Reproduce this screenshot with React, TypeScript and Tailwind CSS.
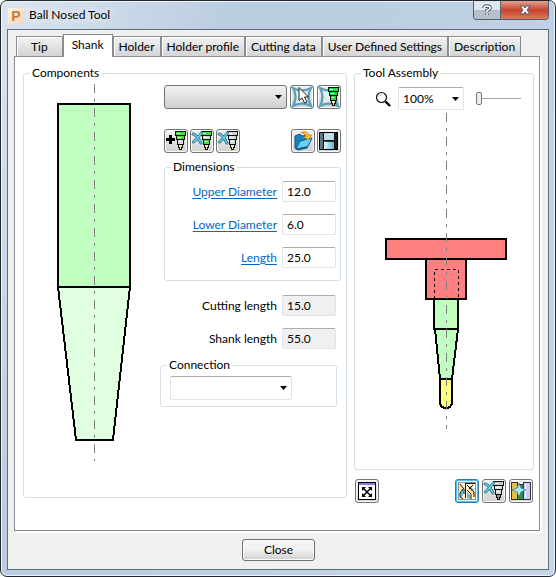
import { useState } from 'react';
import type { ReactNode } from 'react';

const TABS = ['Tip', 'Shank', 'Holder', 'Holder profile', 'Cutting data', 'User Defined Settings', 'Description'];

const STAR = 'M2 2 Q11 7 20 2 Q15 11 20 20 Q11 15 2 20 Q7 11 2 2 Z';

/*  Square toolbar button with a 22px icon inside.
 */
function IconButton({ label, active = false, children }: { label: string; active?: boolean; children: ReactNode }) {
  return (
    <button
      type="button"
      aria-label={label}
      className={
        active
          ? 'size-6 shrink-0 rounded-[3px] border border-[#2c7ba5] bg-[#e9f8ff] shadow-[inset_0_0_0_1px_#45c4f5]'
          : 'size-6 shrink-0 rounded-[3px] border border-[#747474] bg-linear-to-b from-[#f2f2f2] to-[#d2d2d2] shadow-[inset_0_0_0_1px_#fafafa]'
      }
    >
      <svg viewBox="0 0 22 22" className="size-[22px]">{children}</svg>
    </button>
  );
}

/*  Small stepped tool: three sections and a tip.
 */
function ToolGlyph({ top, middle, low = '#d8d8d8', tip = '#ffe9a0' }: { top: string; middle: string; low?: string; tip?: string }) {
  return (
    <g stroke="#111" strokeWidth="1" shapeRendering="crispEdges">
      <rect x="10.5" y="1.5" width="10" height="4" fill={top} />
      <rect x="11.5" y="5.5" width="8" height="4" fill={middle} />
      <rect x="12.5" y="9.5" width="6" height="5" fill={low} />
      <path d="M13.500 14.500 h4 v3 h-1 v2 h-2 v-2 h-1 z" fill={tip} />
      <path d="M12 3.500 h3" stroke="#fff" />
      <path d="M13 7.500 h3 M14 11.500 h2" stroke="#fff" />
    </g>
  );
}

function BlueCross() {
  return (
    <g fill="none" strokeLinecap="round">
      <path d="M2 4 Q6 5 10 13 M10.500 3 Q7 8 2.500 12" stroke="#246c83" strokeWidth="3" />
      <path d="M2 4 Q6 5 10 13 M10.500 3 Q7 8 2.500 12" stroke="#69cde6" strokeWidth="1.600" />
    </g>
  );
}

function Group({ title, className, children }: { title: string; className: string; children: ReactNode }) {
  return (
    <fieldset className={'min-w-0 rounded-[3px] border border-[#d5dfe5] ' + className}>
      <legend className="ml-1.5 h-4 px-0.5 leading-4">{title}</legend>
      {children}
    </fieldset>
  );
}

function Arrow() {
  return (
    <svg viewBox="0 0 7 4" className="pointer-events-none absolute top-1/2 right-[5px] h-1 w-[7px] -translate-y-1/2">
      <path d="M0 0 H7 L3.500 4 Z" fill="#000" />
    </svg>
  );
}

function Field({ id, label, value, link = false, readOnly = false }: { id: string; label: string; value: string; link?: boolean; readOnly?: boolean }) {
  return (
    <div className="flex items-center justify-end gap-[5px]">
      <label htmlFor={id}>
        {link ? <a href={'#' + id} className="text-[#0066cc] underline underline-offset-2">{label}</a> : label}
      </label>
      <input
        id={id}
        defaultValue={value}
        readOnly={readOnly}
        className={
          'h-[21px] w-[54px] rounded-[2px] border border-[#e2e3ea] border-t-[#abadb3] px-1 outline-none ' +
          (readOnly ? 'bg-[#f0f0f0]' : 'bg-white')
        }
      />
    </div>
  );
}

function ShankDrawing() {
  return (
    <svg viewBox="0 0 90 380" className="h-[380px] w-[90px]" shapeRendering="crispEdges">
      <rect x="9" y="23" width="72" height="183" fill="#c0ffc0" stroke="#000" strokeWidth="2" />
      <path d="M9 206 H81 L64 359 H27 Z" fill="#e0ffe0" stroke="#000" strokeWidth="2" />
      <path d="M45.500 3 V380" stroke="#808080" strokeDasharray="9 6 3 6" />
    </svg>
  );
}

function AssemblyDrawing() {
  return (
    <svg viewBox="0 0 134 359" className="mx-auto h-[359px] w-[134px]" shapeRendering="crispEdges">
      <g stroke="#000" strokeWidth="2">
        <rect x="9" y="129" width="120" height="20" fill="#ff8080" />
        <rect x="49" y="149" width="40" height="40" fill="#ff8080" />
        <rect x="57" y="189" width="24" height="30" fill="#c0ffc0" />
        <path d="M58 219 H81 L75 269 H63 Z" fill="#c0ffc0" />
        <path d="M63 269 H75 V293 Q74 298 69 298 Q64 298 63 293 Z" fill="#ffff80" />
      </g>
      <path d="M57.500 189 V159.500 H81.500 V189" fill="none" stroke="#000" strokeDasharray="3 3" />
      <path d="M69.500 3 V319" stroke="#808080" strokeDasharray="9 6 3 6" />
    </svg>
  );
}

function Components() {
  return (
    <Group title="Components" className="flex-1">
      <div className="flex pr-[5px] pb-9">
        <div className="flex w-[140px] shrink-0 justify-center">
          <ShankDrawing />
        </div>
        <div className="flex flex-1 flex-col pt-1">
          <div className="flex gap-[3px]">
            <div className="relative flex-1">
              <select aria-label="Component" className="h-6 w-full appearance-none rounded-[3px] border border-[#747474] bg-linear-to-b from-[#f2f2f2] to-[#d0d0d0] px-1" />
              <Arrow />
            </div>
            <IconButton label="Pick component">
              <path d={STAR} fill="#e3edef" stroke="#5aa3b6" strokeWidth="2.400" />
              <path d="M8 1.500 V14.500 L11 12 L13.500 17 L16 16 L13.500 11 H17.500 Z" fill="#fff" stroke="#222" />
            </IconButton>
            <IconButton label="Pick tool">
              <path d={STAR} fill="#e3edef" stroke="#5aa3b6" strokeWidth="2.400" />
              <ToolGlyph top="#35d335" middle="#35d335" low="#35d335" />
            </IconButton>
          </div>

          <div className="mt-5 flex justify-between">
            <div className="flex gap-0.5">
              <IconButton label="Add component">
                <path d="M5.500 5 V14 M1 9.500 H10" stroke="#000" strokeWidth="3" />
                <ToolGlyph top="#3be03b" middle="#3be03b" />
              </IconButton>
              <IconButton label="Remove component">
                <ToolGlyph top="#3be03b" middle="#d8d8d8" low="#3be03b" />
                <BlueCross />
              </IconButton>
              <IconButton label="Clear components">
                <ToolGlyph top="#d0d0d0" middle="#d8d8d8" />
                <BlueCross />
              </IconButton>
            </div>
            <div className="flex gap-0.5">
              <IconButton label="Open">
                <path d="M3 18 V6 L8 4 L10 6 L15 5 V9 L18 10 L15 18 L6 20 Z" fill="#1685bb" stroke="#0a5880" />
                <path d="M4 19 L8 11 L20 8 L16 16.500 Z" fill="#69d1f5" stroke="#0a5880" />
                <path d="M9 2.500 Q15 0 16.500 5 H19.500 L16 10 L11.500 6.500 H14 Q13 3.500 9 2.500 Z" fill="#f7bd32" stroke="#b77a13" strokeWidth="0.700" />
              </IconButton>
              <IconButton label="Save">
                <defs>
                  <linearGradient id="disk" x1="0" x2="1">
                    <stop offset="0" stopColor="#6c8791" />
                    <stop offset="0.5" stopColor="#2b3a40" />
                    <stop offset="1" stopColor="#10181b" />
                  </linearGradient>
                  <linearGradient id="slot" x1="0" x2="1">
                    <stop offset="0" stopColor="#e4f8fd" />
                    <stop offset="1" stopColor="#5cb9da" />
                  </linearGradient>
                </defs>
                <rect x="1.500" y="2.500" width="18" height="17" fill="url(#disk)" stroke="#000" />
                <rect x="6" y="3" width="10" height="7" fill="#bfdfe8" />
                <rect x="6" y="12" width="10" height="7" fill="url(#slot)" />
                <path d="M5.500 3 V19 M16.500 3 V19 M6 10.500 H16" stroke="#111" />
              </IconButton>
            </div>
          </div>

          <Group title="Dimensions" className="mt-1.5">
            <div className="flex flex-col gap-3 pt-1.5 pr-1 pb-3">
              <Field id="upper" label="Upper Diameter" value="12.0" link />
              <Field id="lower" label="Lower Diameter" value="6.0" link />
              <Field id="length" label="Length" value="25.0" link />
            </div>
          </Group>

          <div className="mt-3.5 flex flex-col gap-3 pr-[5px]">
            <Field id="cutting" label="Cutting length" value="15.0" readOnly />
            <Field id="shank" label="Shank length" value="55.0" readOnly />
          </div>

          <Group title="Connection" className="mt-2 mr-1 -ml-1">
            <div className="pt-[3px] pr-11 pb-1.5 pl-[9px]">
              <div className="relative">
                <select aria-label="Connection" className="block h-6 w-full appearance-none rounded-[2px] border border-[#e2e3ea] border-t-[#abadb3] bg-white px-1" />
                <Arrow />
              </div>
            </div>
          </Group>
        </div>
      </div>
    </Group>
  );
}

function ToolAssembly() {
  const [zoom, setZoom] = useState(0);

  return (
    <div className="flex w-[180px] shrink-0 flex-col gap-[9px]">
      <Group title="Tool Assembly" className="">
        <div className="flex items-center pt-1.5 pr-3 pl-5">
          <svg viewBox="0 0 16 16" className="size-4 shrink-0" fill="none">
            <circle cx="6.500" cy="6.500" r="5" stroke="#111" strokeWidth="1.200" />
            <path d="M4 5.500 Q5 3.500 7 3.500" stroke="#aaa" />
            <path d="M10.500 10.500 L15 15" stroke="#000" strokeWidth="2.400" />
          </svg>
          <div className="relative ml-[7px] w-[66px] shrink-0">
            <select aria-label="Zoom" className="block h-[23px] w-full appearance-none rounded-[2px] border border-[#e2e3ea] border-t-[#abadb3] bg-white px-1">
              <option>100%</option>
            </select>
            <Arrow />
          </div>
          <input
            type="range"
            aria-label="Zoom level"
            value={zoom}
            onChange={(e) => setZoom(Number(e.target.value))}
            className="ml-3 h-4 w-0 min-w-0 flex-1 appearance-none bg-transparent [&::-webkit-slider-runnable-track]:h-px [&::-webkit-slider-runnable-track]:bg-[#a5a5a5] [&::-webkit-slider-thumb]:-mt-1.5 [&::-webkit-slider-thumb]:h-[13px] [&::-webkit-slider-thumb]:w-1.5 [&::-webkit-slider-thumb]:appearance-none [&::-webkit-slider-thumb]:rounded-[2px] [&::-webkit-slider-thumb]:border [&::-webkit-slider-thumb]:border-[#777] [&::-webkit-slider-thumb]:bg-[#eee]"
          />
        </div>
        <AssemblyDrawing />
      </Group>

      <div className="flex justify-between pr-px pl-px">
        <IconButton label="Fit to view">
          <rect x="2.500" y="2.500" width="17" height="17" fill="#fff" stroke="#000" />
          <rect x="3" y="3" width="16" height="2" fill="#7b7be0" />
          <path d="M7 8 L15 16 M15 8 L7 16" stroke="#000" strokeWidth="1.500" />
          <path d="M6 7 h4 l-4 4 z M16 7 v4 l-4 -4 z M6 17 v-4 l4 4 z M16 17 h-4 l4 -4 z" fill="#000" />
        </IconButton>
        <div className="flex gap-[3px]">
          <IconButton label="Show cutting flutes" active>
            <rect x="2" y="2" width="18" height="18" fill="#fff6dc" />
            <path d="M3 3 L8 9 L8 14 L3 8 Z M12 4 L19 12 V18 L12 10 Z" fill="#ffdf9a" />
            <path d="M4 13 L7 10 V15 L5 18 Z M11 12 L14 15 V19 L11 18 Z M14 6 L18 10 L15 11 Z" fill="#5ebbd8" />
            <path d="M4 4 L8 9 V14 M7 9 L4 13 V17 L7 19 M9.500 3 V18 M11 5 L18 12 V17 M11 10 L15 14 V19 M17 5 L13 9 M9 3.500 H19" fill="none" stroke="#151515" />
            <rect x="2.500" y="2.500" width="17" height="17" fill="none" stroke="#333" strokeDasharray="1 1" />
          </IconButton>
          <IconButton label="Clear tool">
            <ToolGlyph top="#c9c9c9" middle="#ddd" tip="#999" />
            <BlueCross />
          </IconButton>
          <IconButton label="Add to database">
            <rect x="1.500" y="2.500" width="6" height="17" fill="#e6bd48" stroke="#333" />
            <rect x="7.500" y="4.500" width="6" height="15" fill="#338b4d" stroke="#333" />
            <rect x="13.500" y="2.500" width="7" height="17" fill="#c9cdf4" stroke="#333" />
            <path d="M15.500 4 V18" stroke="#fff" />
            <path d="M9 3 L11 8 L16 10 L11 12 L9 17 L7 12 L2 10 L7 8 Z" fill="#a6e8f0" stroke="#267b8c" strokeWidth="0.700" />
          </IconButton>
        </div>
      </div>
    </div>
  );
}

function TitleBar() {
  return (
    <header className="flex h-7 items-start pl-[7px]">
      <span aria-hidden="true" className="mt-[7px] flex size-4 items-center justify-center bg-linear-to-br from-[#fff3e6] to-[#f6d3b3] font-['Liberation_Sans',sans-serif] text-sm leading-4 font-bold text-[#c07f3c]">P</span>
      <h1 className="mt-1.5 ml-[5px] leading-4 [text-shadow:0_0_8px_#fff,0_0_8px_#fff]">Ball Nosed Tool</h1>
      <div className="mr-1.5 ml-auto flex h-[19px] overflow-hidden rounded-b-[4px] border border-t-0 border-[#4f5d6c]">
        <button type="button" aria-label="Help" className="flex w-[27px] items-center justify-center border-r border-[#5d6873] bg-linear-to-b from-[#dfe6ed] from-50% to-[#b5c0cb] to-50%">
          <svg viewBox="0 0 10 12" className="h-3 w-2.5" fill="none">
            <path d="M2 4 Q2 2 5 2 Q8 2 8 4 Q8 5.500 5 6.500 V8 M5 9.500 V11" stroke="#4b5362" strokeWidth="3.400" />
            <path d="M2 4 Q2 2 5 2 Q8 2 8 4 Q8 5.500 5 6.500 V8 M5 9.500 V11" stroke="#fff" strokeWidth="1.600" />
          </svg>
        </button>
        <button type="button" aria-label="Close window" className="flex w-[47px] items-center justify-center bg-linear-to-b from-[#e3a092] via-[#c7402c] via-50% to-[#dc7a5c]">
          <svg viewBox="0 0 12 10" className="h-2.5 w-3">
            <path d="M1 1 H4.500 L6 3 L7.500 1 H11 L8 5 L11 9 H7.500 L6 7 L4.500 9 H1 L4 5 Z" fill="#fff" stroke="#53546a" />
          </svg>
        </button>
      </div>
    </header>
  );
}

export default function App() {
  const [tab, setTab] = useState('Shank');

  return (
    <div className="flex min-h-screen flex-col rounded-[7px] border border-[#23282e] bg-linear-115 from-[#dbe5f0] via-[#b9cce0] via-30% to-[#c5d6e8] px-1.5 pb-1.5 font-['Lato','Open_Sans',sans-serif] text-xs leading-4 text-black shadow-[inset_0_0_0_1px_#eef5fb]">
      <div className="-mx-1.5">
        <TitleBar />
      </div>
      <main className="flex flex-1 flex-col border border-[#5c6f78] bg-[#f0f0f0] pt-1 pr-2 pl-1.5">
        <div role="tablist" className="flex items-end pl-0.5">
          {TABS.map((name) => (
            <button
              key={name}
              type="button"
              role="tab"
              aria-selected={tab === name}
              onClick={() => setTab(name)}
              className={
                tab === name
                  ? 'relative z-10 -mb-px h-[23px] border border-b-0 border-[#898c95] bg-white px-2 pb-0.5 whitespace-nowrap'
                  : 'h-5 border border-b-0 border-[#898c95] bg-linear-to-b from-[#f2f2f2] to-[#d4d4d4] px-[5px] whitespace-nowrap shadow-[inset_1px_1px_0_#fff] first:px-3.5'
              }
            >
              {name}
            </button>
          ))}
        </div>
        <div role="tabpanel" className="flex flex-1 items-start gap-[7px] border border-[#898c95] bg-white pt-2 pr-[5px] pl-2 shadow-[2px_2px_0_#fff]">
          <Components />
          <ToolAssembly />
        </div>
        <footer className="flex justify-center py-2 pl-[3px]">
          <button type="button" className="h-[22px] w-[73px] rounded-[3px] border border-[#707070] bg-linear-to-b from-[#f3f3f3] from-45% to-[#d0d0d0] shadow-[inset_0_0_0_1px_#fcfcfc]">
            Close
          </button>
        </footer>
      </main>
    </div>
  );
}
